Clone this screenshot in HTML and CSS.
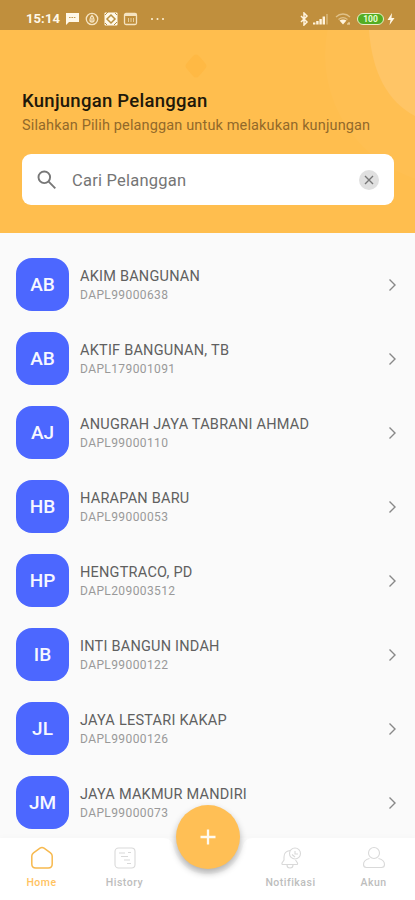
FILE: index.html
```html
<!DOCTYPE html>
<html lang="id">
<head>
<meta charset="utf-8">
<meta name="viewport" content="width=device-width, initial-scale=1">
<title>Kunjungan Pelanggan</title>
<link rel="stylesheet" href="styles.css">
</head>
<body>
<div class="app">
  <div class="status">
    <span class="clock">15:14</span>
    <svg class="notices" width="102" height="14" viewBox="0 0 102 14" fill="none">
      <path d="M1 1h13v9H4l-3 3z" fill="#fff8e8"/><path d="M4 5.5h7" stroke="#c49a52" stroke-width="1.2" stroke-dasharray="1.6 .8"/>
      <circle cx="27" cy="7" r="5.7" stroke="#f5e3c0" stroke-width="1.3"/><path d="M27 3.5c3 3 2.500 6.500 0 6.500s-3-3.500 0-6.500zM27 6v3" stroke="#f5e3c0" stroke-width="1.3"/>
      <rect x="39.500" y=".5" width="13" height="13" rx="1" fill="#fff8e8"/><path d="M46 3l4 4-4 4-4-4z" stroke="#b9903f" stroke-width="1.5"/><path d="M40 3l3-3M49 13l3-3M40 11l2 2M50 1l2 2" stroke="#b9903f"/>
      <rect x="59.500" y="1.500" width="12" height="11" rx="1.500" stroke="#f5e3c0" stroke-width="1.300"/><path d="M59 3h13" stroke="#f5e3c0" stroke-width="2"/><path d="M63.500 6v4M66 6v4M68.500 6v4" stroke="#e6cc98"/>
      <g fill="#fff3d8"><circle cx="87" cy="7" r="1"/><circle cx="92.500" cy="7" r="1"/><circle cx="98" cy="7" r="1"/></g>
    </svg>
    <svg class="signals" width="56" height="14" viewBox="0 0 56 14" fill="none">
      <path d="M2 4l6 6-3 3V1l3 3-6 6" stroke="#fff3dc" stroke-width="1.500"/>
      <path d="M14 12.500v-2h2.400v2zM17.200 12.500V9h2.400v3.500zM20.400 12.500V7h2.400v5.500zM23.600 12.500V4.500H26v8z" fill="#fff3dc"/><path d="M28 12.500V2" stroke="#dfc189" stroke-width="1.200"/>
      <path d="M37 5c4-4 10-4 14 0M39.500 7.500c3-2.500 6-2.500 9 0" stroke="#dfc189" stroke-width="1.300"/><path d="M40.500 8.500c2-1.500 5-1.500 7 0L44 12.500z" fill="#fff3dc"/><path d="M48 12h3M50 10v2" stroke="#f4dfb5"/>
    </svg>
    <span class="battery">100</span>
    <svg class="bolt" width="8" height="12" viewBox="0 0 8 12"><path d="M5 0L.5 7H3.500L2.500 12 7.500 5H4.500z" fill="#fff8e8"/></svg>
  </div>
  <header class="header">
    <svg class="decor" width="415" height="203" viewBox="0 0 415 203">
      <circle cx="455" cy="25" r="130" fill="#fff" opacity=".025"/>
      <path d="M369 0c3 43 19 72 46 86V0z" fill="#ffc566"/>
      <path d="M193 26q3-3 6 0l6 7q3 3 0 6l-6 7q-3 3-6 0l-6-7q-3-3 0-6z" fill="#ffb944"/>
    </svg>
    <h1 class="title">Kunjungan Pelanggan</h1>
    <p class="subtitle">Silahkan Pilih pelanggan untuk melakukan kunjungan</p>
    <div class="search">
      <svg width="20" height="20" viewBox="0 0 20 20" fill="none" stroke="#777" stroke-width="1.900"><circle cx="7.300" cy="7.300" r="5.800"/><path d="M11.700 11.700l6.600 6.600"/></svg>
      <span class="placeholder">Cari Pelanggan</span>
      <svg width="20" height="20" viewBox="0 0 20 20"><circle cx="10" cy="10" r="10" fill="#e0e0e0"/><path d="M6 6l8 8M14 6l-8 8" stroke="#777" stroke-width="1.400"/></svg>
    </div>
  </header>
  <main class="list">
    <div class="row"><span class="avatar">AB</span><div class="info"><div class="name">AKIM BANGUNAN</div><div class="code">DAPL99000638</div></div><svg class="chevron" viewBox="0 0 8 14"><path d="M1.500 1.500L7 7l-5.500 5.500"/></svg></div>
    <div class="row"><span class="avatar">AB</span><div class="info"><div class="name">AKTIF BANGUNAN, TB</div><div class="code">DAPL179001091</div></div><svg class="chevron" viewBox="0 0 8 14"><path d="M1.500 1.500L7 7l-5.500 5.500"/></svg></div>
    <div class="row"><span class="avatar">AJ</span><div class="info"><div class="name">ANUGRAH JAYA TABRANI AHMAD</div><div class="code">DAPL99000110</div></div><svg class="chevron" viewBox="0 0 8 14"><path d="M1.500 1.500L7 7l-5.500 5.500"/></svg></div>
    <div class="row"><span class="avatar">HB</span><div class="info"><div class="name">HARAPAN BARU</div><div class="code">DAPL99000053</div></div><svg class="chevron" viewBox="0 0 8 14"><path d="M1.500 1.500L7 7l-5.500 5.500"/></svg></div>
    <div class="row"><span class="avatar">HP</span><div class="info"><div class="name">HENGTRACO, PD</div><div class="code">DAPL209003512</div></div><svg class="chevron" viewBox="0 0 8 14"><path d="M1.500 1.500L7 7l-5.500 5.500"/></svg></div>
    <div class="row"><span class="avatar">IB</span><div class="info"><div class="name">INTI BANGUN INDAH</div><div class="code">DAPL99000122</div></div><svg class="chevron" viewBox="0 0 8 14"><path d="M1.500 1.500L7 7l-5.500 5.500"/></svg></div>
    <div class="row"><span class="avatar">JL</span><div class="info"><div class="name">JAYA LESTARI KAKAP</div><div class="code">DAPL99000126</div></div><svg class="chevron" viewBox="0 0 8 14"><path d="M1.500 1.500L7 7l-5.500 5.500"/></svg></div>
    <div class="row"><span class="avatar">JM</span><div class="info"><div class="name">JAYA MAKMUR MANDIRI</div><div class="code">DAPL99000073</div></div><svg class="chevron" viewBox="0 0 8 14"><path d="M1.500 1.500L7 7l-5.500 5.500"/></svg></div>
  </main>
  <nav class="nav">
    <svg class="nav-shape" width="415" height="62" viewBox="0 0 415 62"><path d="M0 0h163q8 0 10 8c5 18 17 28 35 28s30-10 35-28q2-8 10-8h162v62H0z" fill="#fff"/></svg>
    <div class="tab active"><svg width="24" height="24" viewBox="0 0 24 24"><path d="M10 2.200q2-1.400 4 0l6.500 4.600q1.700 1.300 1.700 3.200v8q0 4-4 4H5.800q-4 0-4-4v-8q0-1.900 1.700-3.200z"/></svg><span>Home</span></div>
    <div class="tab"><svg width="24" height="24" viewBox="0 0 24 24"><rect x="2" y="2" width="20" height="20" rx="3.500"/><path d="M6 7h6M8 10.500h7M11 14h6M14 17.500h4M15 6.500h3"/></svg><span>History</span></div>
    <div class="tab gap"></div>
    <div class="tab"><svg width="24" height="24" viewBox="0 0 24 24"><circle cx="16" cy="7.500" r="5.500"/><path d="M16 5v3h3M11 4.500C7 5 5 8 5 11v3l-2 3q-.5 1.500 1 1.500h13.500q1.500 0 1-1.500l-2-3M8 19c0 4 6 4 6 0M13 8.500l3 2.500"/></svg><span>Notifikasi</span></div>
    <div class="tab"><svg width="24" height="24" viewBox="0 0 24 24"><circle cx="12" cy="7" r="5.500"/><path d="M7.500 12.500Q1.500 14 1.500 18.500q0 3 3 3h15q3 0 3-3 0-4.500-6-6"/></svg><span>Akun</span></div>
    <div class="fab"><svg width="16" height="16" viewBox="0 0 16 16"><path d="M8 .5v15M.5 8h15" stroke="#fffaf0" stroke-width="2.300"/></svg></div>
  </nav>
</div>
</body>
</html>
```
FILE: styles.css
```css
* { box-sizing: border-box; }
body { margin: 0; font-family: Roboto, "Liberation Sans", sans-serif; background: #fafafa; }
svg { display: block; flex: none; }
.app { width: 415px; height: 900px; display: flex; flex-direction: column; overflow: hidden; }
.status { height: 30px; flex: none; background: #c08f3d; display: flex; align-items: center; padding: 8px 20px 0 26px; }
.clock { width: 39px; color: #fff8e8; font-size: 13px; font-weight: 700; letter-spacing: .1px; line-height: 16px; }
.signals { margin-left: auto; }
.battery { width: 27px; height: 12px; margin-left: 2px; border: 1.5px solid #e9efc7; border-radius: 6px; background: #53ad22; color: #e8ffd6; font-size: 8.500px; font-weight: 700; line-height: 11px; text-align: center; }
.bolt { margin-left: 3px; }
.header { position: relative; height: 203px; flex: none; background: #ffbe4e; padding: 59px 21px 0 22px; }
.decor { position: absolute; left: 0; top: 0; }
.title { position: relative; margin: 0; font-size: 18.500px; font-weight: 500; line-height: 24px; letter-spacing: .27px; color: #20180a; white-space: nowrap; }
.subtitle { position: relative; margin: 4px 0 0; font-size: 14.500px; line-height: 18px; color: #92692a; letter-spacing: .14px; white-space: nowrap; }
.search { position: relative; height: 51px; margin-top: 19px; padding: 0 15px; border-radius: 9px; background: #fff; display: flex; align-items: center; }
.placeholder { flex: 1; padding: 2px 0 0 15px; font-size: 16.500px; letter-spacing: .22px; color: #757575; }
.list { flex: 1; min-height: 0; overflow: hidden; padding: 14.500px 17px 0 16px; }
.row { height: 74px; display: flex; align-items: center; }
.avatar { width: 53px; height: 53px; border-radius: 16px; background: #4c67ff; color: #f7f8ff; font-size: 19px; font-weight: 500; display: flex; align-items: center; justify-content: center; }
.info { flex: 1; padding: 1px 0 0 11px; white-space: nowrap; }
.name { font-size: 14.500px; line-height: 19px; letter-spacing: .23px; color: #606060; }
.code { font-size: 12px; line-height: 18px; color: #999; letter-spacing: .4px; }
.chevron { width: 8px; height: 14px; margin-right: 2px; fill: none; stroke: #888; stroke-width: 1.400; }
.nav { position: relative; height: 62px; flex: none; display: flex; box-shadow: 0 -2px 5px rgba(0,0,0,.015); }
.nav-shape { position: absolute; left: 0; top: 0; }
.tab { position: relative; width: 83px; display: flex; flex-direction: column; align-items: center; padding-top: 8px; color: #bdbdbd; font-size: 10.500px; font-weight: 500; line-height: 15px; letter-spacing: .5px; }
.tab svg { fill: none; stroke: #d9d9d9; stroke-width: 1.100; }
.tab span { margin-top: 5px; }
.active { color: #ffc35f; }
.active svg { stroke: #f7b94e; stroke-width: 1.500; }
.fab { position: absolute; left: 176px; top: -33px; width: 64px; height: 64px; border-radius: 50%; background: #ffbf55; display: flex; align-items: center; justify-content: center; box-shadow: 0 4px 7px rgba(0,0,0,.3); }
```
